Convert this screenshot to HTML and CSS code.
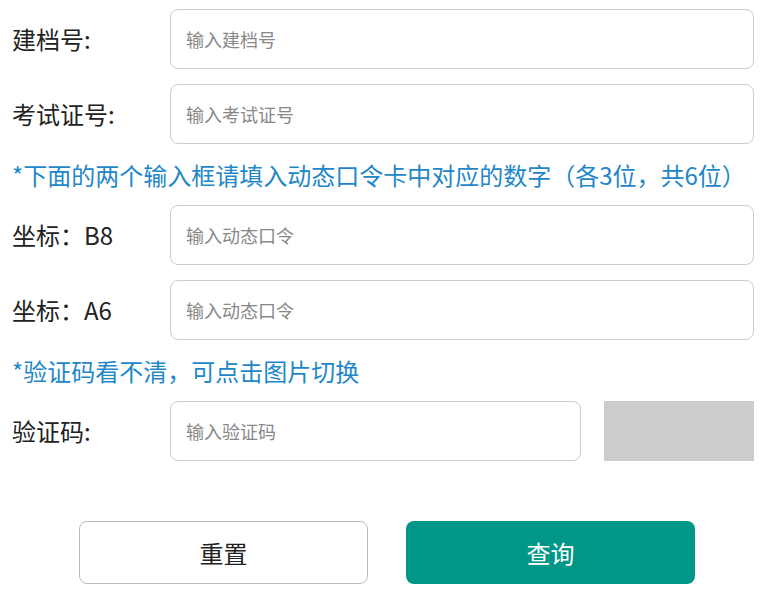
FILE: index.html
```html
<!DOCTYPE html>
<html lang="zh-CN">
<head>
<meta charset="utf-8"/>
<meta name="viewport" content="width=device-width, initial-scale=1.0">
<title>成绩查询</title>
<link rel="stylesheet" href="styles.css">
</head>
<body>

<form class="query-form">
  <!-- 基本信息 -->
  <div class="form-row">
    <label class="form-label">建档号:</label>
    <input class="form-input" type="text" placeholder="输入建档号">
  </div>
  <div class="form-row">
    <label class="form-label">考试证号:</label>
    <input class="form-input" type="text" placeholder="输入考试证号">
  </div>

  <p class="form-tip">*下面的两个输入框请填入动态口令卡中对应的数字（各3位，共6位）</p>

  <!-- 动态口令 -->
  <div class="form-row">
    <label class="form-label">坐标：B8</label>
    <input class="form-input" type="text" placeholder="输入动态口令">
  </div>
  <div class="form-row">
    <label class="form-label">坐标：A6</label>
    <input class="form-input" type="text" placeholder="输入动态口令">
  </div>

  <p class="form-tip">*验证码看不清，可点击图片切换</p>

  <!-- 验证码 -->
  <div class="form-row">
    <label class="form-label">验证码:</label>
    <input class="form-input" type="text" placeholder="输入验证码">
    <div class="captcha"></div>
  </div>

  <div class="form-actions">
    <button type="reset" class="btn btn-reset">重置</button>
    <button type="button" class="btn btn-submit">查询</button>
  </div>
</form>

</body>
</html>
```

FILE: styles.css
```css
/* ======== Reset ======== */
* {
  box-sizing: border-box;
  margin: 0;
  padding: 0;
}

body {
  background: #fff;
  color: #222;
  font-family: "Noto Sans CJK SC", "Noto Sans", sans-serif;
}

/* ======== Form ======== */
.query-form {
  display: flex;
  flex-direction: column;
  gap: 15px;
  padding: 9px 12px 0;
}

.form-row {
  display: flex;
  align-items: center;
  height: 60px;
}

.form-label {
  flex-shrink: 0;
  width: 158px;
  margin-top: -2px;
  font-size: 24px;
  color: #222;
}

.form-input {
  flex: 1;
  height: 60px;
  padding: 0 15px;
  font-family: inherit;
  font-size: 18px;
  color: #333;
  background: #fff;
  border: 1px solid #ccc;
  border-radius: 8px;
  outline: none;
}

.form-input::placeholder {
  color: #888;
}

.form-tip {
  height: 31px;
  line-height: 31px;
  font-size: 24px;
  color: #1f87c8;
  white-space: nowrap;
}

/* — captcha picture — */
.captcha {
  flex-shrink: 0;
  width: 150px;
  height: 60px;
  margin-left: 23px;
  background: #ccc;
  cursor: pointer;
}

/* ======== Buttons ======== */
.form-actions {
  display: flex;
  gap: 38px;
  margin-top: 45px;
  padding-left: 67px;
}

.btn {
  width: 289px;
  height: 63px;
  font-family: inherit;
  font-size: 24px;
  border-radius: 8px;
  cursor: pointer;
}

.btn-reset {
  color: #222;
  background: #fff;
  border: 1px solid #bbb;
}

.btn-submit {
  color: #fff;
  background: #009688;
  border: none;
}
```
